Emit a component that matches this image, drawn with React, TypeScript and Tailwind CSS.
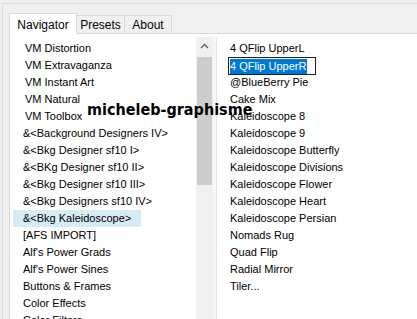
import React from "react";

const leftItems = [
  "VM Distortion",
  "VM Extravaganza",
  "VM Instant Art",
  "VM Natural",
  "VM Toolbox",
  "&<Background Designers IV>",
  "&<Bkg Designer sf10 I>",
  "&<BKg Designer sf10 II>",
  "&<Bkg Designer sf10 III>",
  "&<Bkg Designers sf10 IV>",
  "&<Bkg Kaleidoscope>",
  "[AFS IMPORT]",
  "Alf's Power Grads",
  "Alf's Power Sines",
  "Buttons & Frames",
  "Color Effects",
  "Color Filters",
];

const rightItems = [
  "4 QFlip UpperL",
  "4 QFlip UpperR",
  "@BlueBerry Pie",
  "Cake Mix",
  "Kaleidoscope 8",
  "Kaleidoscope 9",
  "Kaleidoscope Butterfly",
  "Kaleidoscope Divisions",
  "Kaleidoscope Flower",
  "Kaleidoscope Heart",
  "Kaleidoscope Persian",
  "Nomads Rug",
  "Quad Flip",
  "Radial Mirror",
  "Tiler...",
];

const selectedLeft = "&<Bkg Kaleidoscope>";
const editing = "4 QFlip UpperR";

export default function App() {
  return (
    <div className="relative h-[319px] w-[417px] overflow-hidden bg-[#f0f0f0] pl-[2px] pt-[3px] text-[11px] text-black [font-family:'Liberation_Sans',Arial,sans-serif]">
      <div className="flex h-full flex-col border-l border-t border-[#dcdcdc] pl-[6px] pt-[9px]">
        {/* tabs */}
        <div className="flex h-[20px] items-end">
          <div className="relative z-10 -mb-px flex h-[21px] w-[68px] items-start justify-center border border-b-0 border-[#d9d9d9] bg-white pt-[2px] text-[12px]">
            Navigator
          </div>
          <div className="flex h-[18px] w-[48px] items-center justify-center border border-l-0 border-b-0 border-[#d9d9d9] bg-[#f0f0f0] pt-[1px] text-[12px]">
            Presets
          </div>
          <div className="flex h-[18px] w-[47px] items-center justify-center border border-l-0 border-b-0 border-[#d9d9d9] bg-[#f0f0f0] pt-[1px] text-[12px]">
            About
          </div>
        </div>

        {/* page */}
        <div className="flex flex-1 border-l border-t border-[#d9d9d9] bg-white pt-[3px]">
          <div className="w-[186px] pt-[3px]">
            {leftItems.map((item) => (
              <div key={item} className="h-[17px] whitespace-nowrap leading-[17px]">
                <span
                  className={
                    "ml-[3px] inline-block px-[10px] " +
                    (item === selectedLeft ? "bg-[#d5ecf7]" : "") +
                    (item.startsWith("VM") ? " pl-[12px]" : "")
                  }
                >
                  {item}
                </span>
              </div>
            ))}
          </div>

          {/* scrollbar */}
          <div className="flex w-[17px] flex-col bg-[#f0f0f0]">
            <div className="flex h-[17px] items-center justify-center">
              <svg width="9" height="6" viewBox="0 0 9 6">
                <polyline points="1,5 4.5,1.5 8,5" fill="none" stroke="#606060" strokeWidth="1.4" />
              </svg>
            </div>
            <div className="mx-[1px] mt-[3px] h-[128px] bg-[#cdcdcd]" />
          </div>

          <div className="w-[4px] border-r border-[#e3e3e3] bg-[#f7f7f7]" />

          <div className="flex-1 pt-[3px]">
            {rightItems.map((item) =>
              item === editing ? (
                <div key={item} className="h-[17px]">
                  <div className="ml-[11px] flex h-[18px] w-[88px] items-center border border-[#1e1e1e] bg-white pl-[1px]">
                    <span className="bg-[#0078d7] pr-[1px] leading-[15px] text-white">{item}</span>
                  </div>
                </div>
              ) : (
                <div key={item} className="h-[17px] whitespace-nowrap pl-[13px] leading-[17px]">
                  {item}
                </div>
              )
            )}
          </div>
        </div>
      </div>

      {/* watermark */}
      <div className="absolute left-[87px] top-[100px] text-[16px] font-bold leading-[20px] text-black [font-family:'DejaVu_Sans_Condensed','DejaVu_Sans',sans-serif] [font-stretch:condensed]">
        micheleb-graphisme
      </div>
    </div>
  );
}
